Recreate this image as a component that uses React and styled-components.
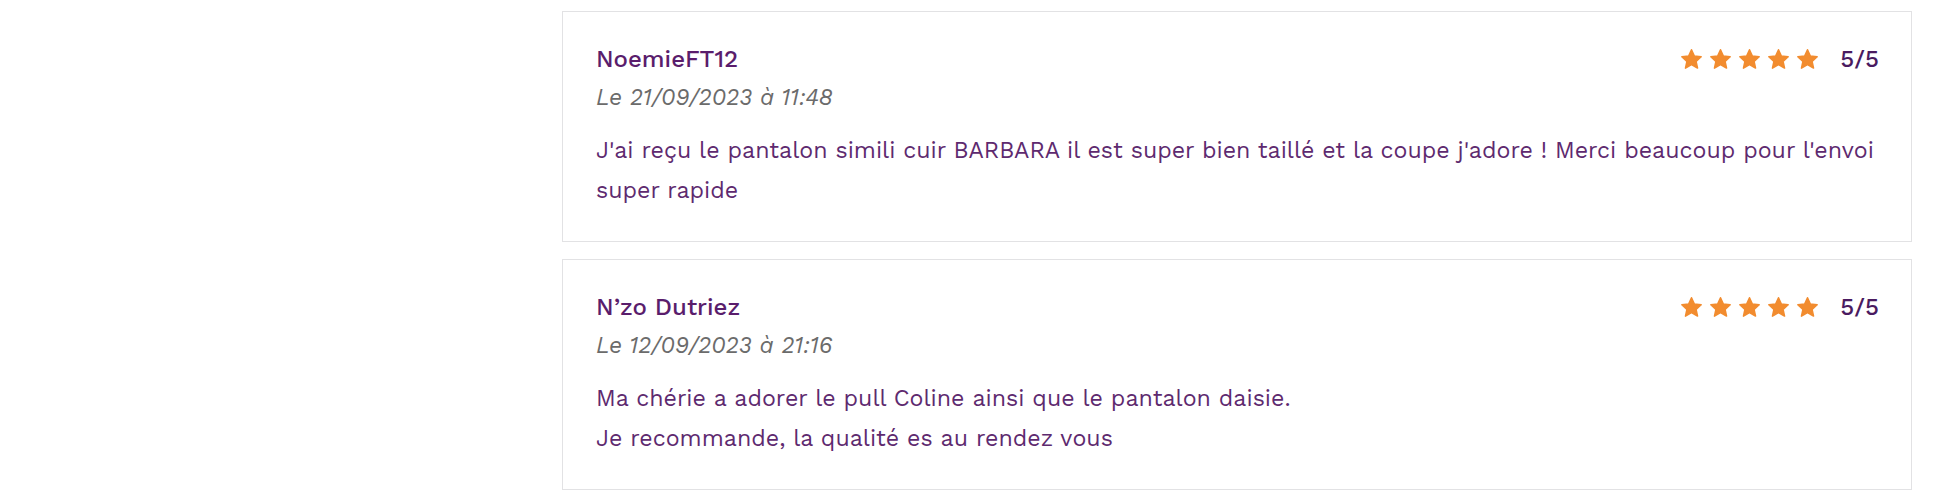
import React from "react";
import styled, { createGlobalStyle } from "styled-components";

const Global = createGlobalStyle`
  html, body { margin: 0; padding: 0; background: #ffffff; }
  body { font-family: "Work Sans", "Open Sans", "Noto Sans", sans-serif; }
`;

const Page = styled.div`
  display: grid;
  grid-template-columns: 562px 1fr;
  padding: 11px 34px 0 0;
`;

const Sidebar = styled.aside``;

const List = styled.section`
  display: flex;
  flex-direction: column;
  gap: 17px;
`;

const Card = styled.article`
  border: 1px solid #e2e2e4;
  background: #fff;
  padding: 32px 32px 31px 33px;
`;

const Header = styled.div`
  display: flex;
  justify-content: space-between;
  align-items: center;
  height: 30px;
`;

const Name = styled.div`
  font-size: 24px;
  line-height: 30px;
  font-weight: 500;
  color: #5a1d6c;
`;

const Rating = styled.div`
  display: flex;
  align-items: center;
`;

const Stars = styled.div`
  display: flex;
  gap: 6px;
  margin-right: 21px;
`;

const Score = styled.span`
  font-size: 24px;
  font-weight: 500;
  color: #4a1b60;
`;

const DateLine = styled.div`
  margin-top: 9px;
  font-size: 23px;
  line-height: 30px;
  font-style: italic;
  color: #6b6b6b;
`;

const Body = styled.p`
  margin: 17px 0 0;
  font-size: 23.2px;
  line-height: 40px;
  color: #5e2a6f;
`;

const Star = () => (
  <svg width="23" height="22" viewBox="0 0 24 23">
    <path
      d="M12 1.8l3 6.6 7.1.8-5.3 4.8 1.5 7-6.3-3.6-6.3 3.6 1.5-7L1.9 9.2 9 8.4z"
      fill="#f28c2f"
      stroke="#f28c2f"
      strokeWidth="1.6"
      strokeLinejoin="round"
    />
  </svg>
);

const reviews = [
  {
    name: "NoemieFT12",
    date: "Le 21/09/2023 à 11:48",
    lines: [
      "J'ai reçu le pantalon simili cuir BARBARA il est super bien taillé et la coupe j'adore ! Merci beaucoup pour l'envoi super rapide",
    ],
  },
  {
    name: "N’zo Dutriez",
    date: "Le 12/09/2023 à 21:16",
    lines: [
      "Ma chérie a adorer le pull Coline ainsi que le pantalon daisie.",
      "Je recommande, la qualité es au rendez vous",
    ],
  },
];

export default function App() {
  return (
    <>
      <Global />
      <Page>
        <Sidebar />
        <List>
          {reviews.map((r) => (
            <Card key={r.name}>
              <Header>
                <Name>{r.name}</Name>
                <Rating>
                  <Stars>
                    {[0, 1, 2, 3, 4].map((i) => (
                      <Star key={i} />
                    ))}
                  </Stars>
                  <Score>5/5</Score>
                </Rating>
              </Header>
              <DateLine>{r.date}</DateLine>
              <Body>
                {r.lines.map((l, i) => (
                  <React.Fragment key={i}>
                    {i > 0 && <br />}
                    {l}
                  </React.Fragment>
                ))}
              </Body>
            </Card>
          ))}
        </List>
      </Page>
    </>
  );
}
